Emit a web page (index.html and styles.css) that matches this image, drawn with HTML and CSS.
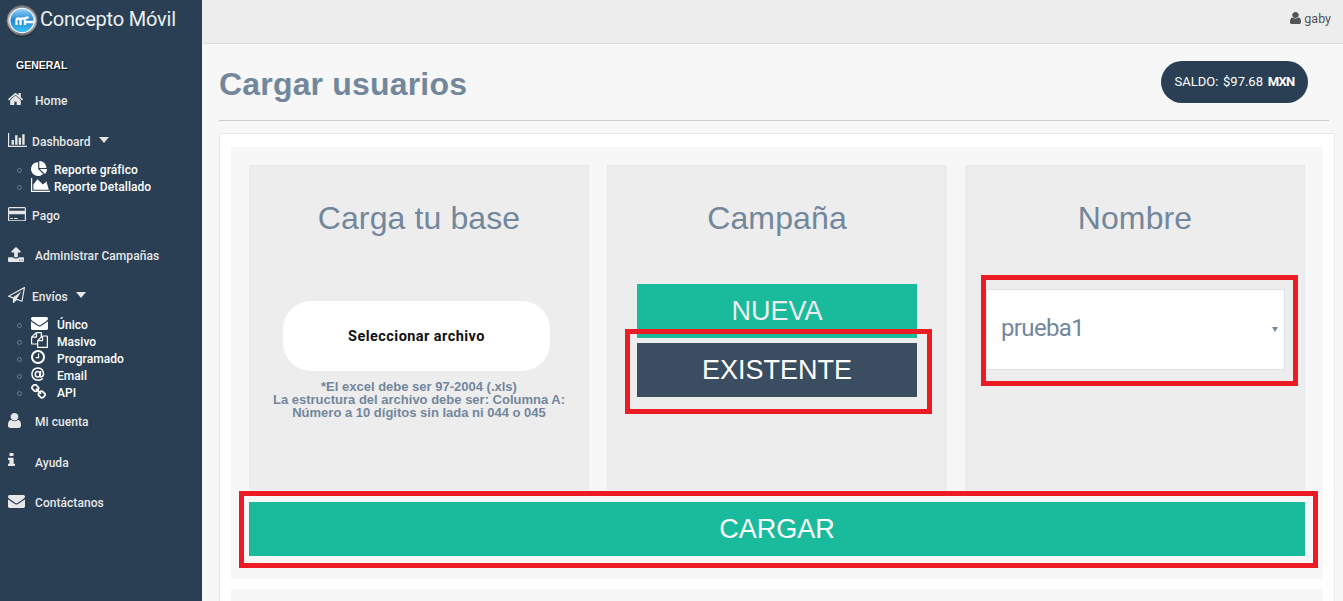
FILE: index.html
```html
<!DOCTYPE html>
<html lang="es">
<head>
<meta charset="utf-8">
<title>Cargar usuarios</title>
<link rel="stylesheet" href="styles.css">
</head>
<body>
<svg class="defs" width="0" height="0" aria-hidden="true">
  <symbol id="envelope" viewBox="0 256 1792 1408" preserveAspectRatio="none"><path d="M1792 710v794q0 66-47 113t-113 47h-1472q-66 0-113-47t-47-113v-794q44 49 101 87 362 246 497 345 57 42 92.500 65.500t94.500 48 110 24.500h2q51 0 110-24.500t94.500-48 92.500-65.500q170-123 498-345 57-39 100-87zm0-294q0 79-49 151t-122 123q-376 261-468 325-10 7-42.500 30.500t-54 38-52 32.500-57.500 27-50 9h-2q-23 0-50-9t-57.500-27-52-32.500-54-38-42.500-30.500q-91-64-262-182.500t-205-142.500q-62-42-117-115.500t-55-136.500q0-78 41.500-130t118.500-52h1472q65 0 112.500 47t47.500 113z"/></symbol>
  <symbol id="user" viewBox="256 128 1280 1536" preserveAspectRatio="none"><path d="M1536 1399q0 109-62.500 187t-150.500 78h-854q-88 0-150.500-78t-62.500-187q0-85 8.500-160.500t31.500-152 58.500-131 94-89 134.500-34.500q131 128 313 128t313-128q76 0 134.500 34.500t94 89 58.500 131 31.500 152 8.500 160.500zm-256-887q0 159-112.500 271.500t-271.500 112.500-271.500-112.500-112.500-271.500 112.500-271.500 271.500-112.500 271.500 112.500 112.500 271.500z"/></symbol>
</svg>
<div class="app">
  <aside class="sidebar">
    <div class="brand">
      <svg class="logo" width="34" height="34" viewBox="0 0 34 34">
        <defs>
          <linearGradient id="rim" x1="0" y1="0" x2="0" y2="1"><stop offset="0" stop-color="#77797c"/><stop offset=".5" stop-color="#c9c9c9"/><stop offset="1" stop-color="#6b6d70"/></linearGradient>
          <linearGradient id="blue" x1="0" y1="0" x2="0" y2="1"><stop offset="0" stop-color="#8ed0f6"/><stop offset=".5" stop-color="#2387d3"/><stop offset="1" stop-color="#3fc0f5"/></linearGradient>
        </defs>
        <circle cx="17" cy="18.500" r="15" fill="#1b232b" opacity=".6"/>
        <circle cx="17" cy="16.500" r="15" fill="url(#rim)" stroke="#66696d" stroke-width=".8"/>
        <circle cx="17" cy="16.500" r="12.800" fill="#f4f4f4"/>
        <circle cx="17" cy="16.500" r="11.500" fill="url(#blue)"/>
        <path d="M11.500 21v-4.500q0-2 2-2t2 2V21M15.500 16.500q0-2 2.200-2t2.200 2V21M19.900 17.500v-1.500q0-2.300 2-2.300h1.800M21 18h8" fill="none" stroke="#fff" stroke-width="2.300"/>
      </svg>
      <span class="brand-name">Concepto Móvil</span>
    </div>
    <div class="section">GENERAL</div>
    <nav class="menu">
      <a class="item"><span class="ico wide"><svg width="15" height="12.500" viewBox="80 253 1632 1283" preserveAspectRatio="none"><path d="M1472 992v480q0 26-19 45t-45 19h-384v-384h-256v384h-384q-26 0-45-19t-19-45v-480q0-1 .5-3t.5-3l575-474 575 474q1 2 1 6zm223-69l-62 74q-8 9-21 11h-3q-13 0-21-7l-692-577-692 577q-12 8-24 7-13-2-21-11l-62-74q-8-10-7-23.500t11-21.500l719-599q32-26 76-26t76 26l244 204v-195q0-14 9-23t23-9h192q14 0 23 9t9 23v408l219 182q10 8 11 21.500t-7 23.500z"/></svg></span><span>Home</span></a>
      <a class="item gap"><span class="ico"><svg width="19" height="14" viewBox="0 128 2048 1536" preserveAspectRatio="none"><path d="M640 896v512h-256v-512h256zm384-512v1024h-256v-1024h256zm1024 1152v128h-2048v-1536h128v1408h1920zm-640-896v768h-256v-768h256zm384-384v1152h-256v-1152h256z"/></svg></span><span>Dashboard</span><i class="caret"></i></a>
      <a class="sub"><i class="dot"></i><span class="sico"><svg width="16" height="15" viewBox="0 0 1728 1664" preserveAspectRatio="none"><path d="M768 890l546 546q-106 108-247.500 168t-298.500 60q-209 0-385.500-103t-279.500-279.500-103-385.500 103-385.500 279.500-279.500 385.500-103v762zm187 6h773q0 157-60 298.500t-168 247.500zm709-128h-768v-768q209 0 385.500 103t279.500 279.500 103 385.500z"/></svg></span><span>Reporte gráfico</span></a>
      <a class="sub"><i class="dot"></i><span class="sico"><svg width="19" height="14" viewBox="0 128 2048 1536" preserveAspectRatio="none"><path d="M2048 1536v128h-2048v-1536h128v1408h1920zm-384-1024l256 896h-1664v-576l448-576 576 576z"/></svg></span><span>Reporte Detallado</span></a>
      <a class="item"><span class="ico"><svg width="18" height="14.500" viewBox="0 128 1920 1536" preserveAspectRatio="none"><path d="M1760 128q66 0 113 47t47 113v1216q0 66-47 113t-113 47h-1600q-66 0-113-47t-47-113v-1216q0-66 47-113t113-47h1600zm-1600 128q-13 0-22.500 9.500t-9.500 22.500v224h1664v-224q0-13-9.500-22.500t-22.500-9.500h-1600zm1600 1280q13 0 22.500-9.500t9.500-22.500v-608h-1664v608q0 13 9.500 22.500t22.500 9.500h1600zm-1504-128v-128h256v128h-256zm384 0v-128h384v128h-384z"/></svg></span><span>Pago</span></a>
      <a class="item"><span class="ico wide"><svg width="16" height="15" viewBox="64 64 1664 1600" preserveAspectRatio="none"><path d="M1344 1472q0-26-19-45t-45-19-45 19-19 45 19 45 45 19 45-19 19-45zm256 0q0-26-19-45t-45-19-45 19-19 45 19 45 45 19 45-19 19-45zm128-224v320q0 40-28 68t-68 28h-1472q-40 0-68-28t-28-68v-320q0-40 28-68t68-28h427q21 56 70.500 92t110.500 36h256q61 0 110.500-36t70.500-92h427q40 0 68 28t28 68zm-325-648q-17 40-59 40h-256v448q0 26-19 45t-45 19h-256q-26 0-45-19t-19-45v-448h-256q-42 0-59-40-17-39 14-69l448-448q18-19 45-19t45 19l448 448q31 30 14 69z"/></svg></span><span>Administrar Campañas</span></a>
      <a class="item gap"><span class="ico"><svg width="17" height="16" viewBox="0 0 1792 1792" preserveAspectRatio="none"><path d="M1764 11q33 24 27 64l-256 1536q-5 29-32 45-14 8-31 8-11 0-24-5l-527-215-298 327q-18 21-47 21-14 0-23-4-19-7-30-23.500t-11-36.500v-452l-472-193q-37-14-40-55-3-39 32-59l1664-960q35-21 68 2zm-342 1499l221-1323-1434 827 336 137 863-639-478 797z"/></svg></span><span>Envíos</span><i class="caret"></i></a>
      <a class="sub far"><i class="dot"></i><span class="sico"><svg width="17" height="13"><use href="#envelope"/></svg></span><span>Único</span></a>
      <a class="sub far"><i class="dot"></i><span class="sico"><svg width="17" height="16" viewBox="0 0 1792 1792" preserveAspectRatio="none"><path d="M1696 384q40 0 68 28t28 68v1216q0 40-28 68t-68 28h-960q-40 0-68-28t-28-68v-288h-544q-40 0-68-28t-28-68v-672q0-40 20-88t48-76l408-408q28-28 76-48t88-20h416q40 0 68 28t28 68v328q68-40 128-40h416zm-544 213l-299 299h299v-299zm-640-384l-299 299h299v-299zm196 647l316-316v-416h-384v416q0 40-28 68t-68 28h-416v640h512v-256q0-40 20-88t48-76zm956 804v-1152h-384v416q0 40-28 68t-68 28h-416v640h896z"/></svg></span><span>Masivo</span></a>
      <a class="sub far"><i class="dot"></i><span class="sico"><svg width="14" height="14" viewBox="128 128 1536 1536"><path d="M1024 544v448q0 14-9 23t-23 9h-320q-14 0-23-9t-9-23v-64q0-14 9-23t23-9h224v-352q0-14 9-23t23-9h64q14 0 23 9t9 23zm416 352q0-148-73-273t-198-198-273-73-273 73-198 198-73 273 73 273 198 198 273 73 273-73 198-198 73-273zm224 0q0 209-103 385.500t-279.500 279.500-385.500 103-385.500-103-279.500-279.500-103-385.500 103-385.500 279.500-279.500 385.500-103 385.500 103 279.500 279.500 103 385.500z"/></svg></span><span>Programado</span></a>
      <a class="sub far"><i class="dot"></i><span class="sico"><svg class="line" width="14" height="14" viewBox="0 0 14 14"><ellipse cx="6.700" cy="7.200" rx="2.400" ry="2.800"/><path d="M9.700 4.200L9 8.500q-.2 1.500 1 1.500 2.500-.4 2.500-3.500Q12 1.200 7.200.9 1.200 1.200.9 7q.3 6 6.300 6.200 2.500 0 4.600-1.600"/></svg></span><span>Email</span></a>
      <a class="sub far"><i class="dot"></i><span class="sico"><svg width="15" height="15" viewBox="16 80 1632 1568"><path d="M1456 1216q0-40-28-68l-208-208q-28-28-68-28-42 0-72 32 3 3 19 18.500t21.500 21.500 15 19 13 25.500 3.500 27.500q0 40-28 68t-68 28q-15 0-27.500-3.500t-25.500-13-19-15-21.500-21.500-18.500-19q-33 31-33 73 0 40 28 68l206 207q27 27 68 27 40 0 68-26l147-146q28-28 28-67zm-703-705q0-40-28-68l-206-207q-28-28-68-28-39 0-68 27l-147 146q-28 28-28 67 0 40 28 68l208 208q27 27 68 27 42 0 72-31-3-3-19-18.500t-21.500-21.500-15-19-13-25.500-3.500-27.500q0-40 28-68t68-28q15 0 27.500 3.500t25.500 13 19 15 21.500 21.500 18.500 19q33-31 33-73zm895 705q0 120-85 203l-147 146q-83 83-203 83-121 0-204-85l-206-207q-83-83-83-203 0-123 88-209l-88-88q-86 88-208 88-120 0-204-84l-208-208q-84-84-84-204t85-203l147-146q83-83 203-83 121 0 204 85l206 207q83 83 83 203 0 123-88 209l88 88q86-88 208-88 120 0 204 84l208 208q84 84 84 204z"/></svg></span><span>API</span></a>
      <a class="item"><span class="ico wide"><svg width="13" height="15"><use href="#user"/></svg></span><span>Mi cuenta</span></a>
      <a class="item gap"><span class="ico wide up"><svg width="7" height="13" viewBox="576 128 640 1408" preserveAspectRatio="none"><path d="M1216 1344v128q0 26-19 45t-45 19h-512q-26 0-45-19t-19-45v-128q0-26 19-45t45-19h64v-384h-64q-26 0-45-19t-19-45v-128q0-26 19-45t45-19h384q26 0 45 19t19 45v576h64q26 0 45 19t19 45zm-128-1152v192q0 26-19 45t-45 19h-256q-26 0-45-19t-19-45v-192q0-26 19-45t45-19h256q26 0 45 19t19 45z"/></svg></span><span>Ayuda</span></a>
      <a class="item"><span class="ico wide"><svg width="17" height="13"><use href="#envelope"/></svg></span><span>Contáctanos</span></a>
    </nav>
  </aside>
  <main class="main">
    <header class="topbar"><svg width="11" height="12"><use href="#user"/></svg><span>gaby</span></header>
    <div class="heading">
      <h1>Cargar usuarios</h1>
      <div class="balance">SALDO: $97.68 <b>MXN</b></div>
    </div>
    <section class="panel">
      <div class="block">
        <div class="cards">
          <div class="card">
            <h2>Carga tu base</h2>
            <button class="file">Seleccionar archivo</button>
            <p class="note">*El excel debe ser 97-2004 (.xls)<br>La estructura del archivo debe ser: Columna A:<br>Número a 10 dígitos sin lada ni 044 o 045</p>
          </div>
          <div class="card">
            <h2>Campaña</h2>
            <div class="choices">
              <button class="btn new">NUEVA</button>
              <div class="marked"><button class="btn existing">EXISTENTE</button><i class="mark mark-existing"></i></div>
            </div>
          </div>
          <div class="card">
            <h2>Nombre</h2>
            <div class="marked select"><span>prueba1</span><i class="arrow"></i><i class="mark mark-select"></i></div>
          </div>
        </div>
        <div class="marked submit"><button class="btn">CARGAR</button><i class="mark mark-submit"></i></div>
      </div>
      <div class="block"></div>
    </section>
  </main>
</div>
</body>
</html>
```
FILE: styles.css
```css
* { box-sizing: border-box; }
body { margin: 0; background: #f7f7f7; font-family: "Liberation Sans", Arial, sans-serif; color: #73879c; }
.defs { position: absolute; }
.app { display: flex; height: 601px; overflow: hidden; }
svg { display: block; fill: currentColor; }
button { border: 0; padding: 0; font-family: inherit; display: block; }

.sidebar { width: 202px; flex: none; background: #2a3f54; color: #e7e7e7; }
.brand { display: flex; height: 56px; padding: 4px 0 0 5px; }
.brand-name { margin-left: 1px; font: 20px/30px Roboto, sans-serif; letter-spacing: -.2px; color: #ecf0f1; white-space: nowrap; }
.section { height: 24px; padding-left: 16px; font: bold 10.500px/19px "Liberation Sans", Arial, sans-serif; letter-spacing: 0; color: #fff; text-shadow: 1px 1px #000; }
.menu { display: flex; flex-direction: column; font: 500 12px/17px Roboto, sans-serif; letter-spacing: .05px; }
.item { display: flex; align-items: center; height: 40px; padding-left: 8px; padding-top: 3px; }
.item.gap { margin-top: 1px; }
.ico { width: 24px; margin-bottom: 5px; }
.ico.wide { width: 27px; }
.ico.up { margin-bottom: 8px; }
.caret { margin: 0 0 5px 8px; border: 5.500px solid transparent; border-top: 6px solid #e7e7e7; border-bottom: 0; }
.sub { display: flex; align-items: center; height: 17px; padding: 1px 0 0 17px; color: #fff; }
.dot { width: 5px; height: 5px; margin-right: 9px; border: 1px solid #6d7f92; border-radius: 50%; margin-top: 1px; }
.sico { width: 23px; margin-bottom: 4px; }
.far .sico { width: 26px; }
.line { fill: none; stroke: currentColor; stroke-width: 1.5; }

.main { flex: 1; min-width: 0; }
.topbar { display: flex; justify-content: flex-end; align-items: center; gap: 3px; height: 44px; padding: 0 12px 7px 0; background: #ededed; border-bottom: 1px solid #d9dee4; font: 12.5px Roboto, sans-serif; color: #515356; }
.heading { display: flex; justify-content: space-between; height: 77px; margin: 0 14px 0 17px; padding: 17px 21px 0 0; border-bottom: 1px solid #ccc; }
h1 { margin: 0; font-size: 32px; line-height: 46px; letter-spacing: .18px; }
.balance { width: 147px; height: 42px; border-radius: 21px; background: #2a3f54; color: #fff; text-align: center; font: 13px/41px Roboto, sans-serif; word-spacing: 1.500px; white-space: nowrap; }
.balance b { letter-spacing: -.7px; }
.panel { width: 1116px; height: 500px; margin: 12px 0 0 17px; padding: 13px 11px; background: #fff; border: 1px solid #e6e9ed; }
.block { height: 432px; margin-bottom: 10px; padding: 18px 18px 0; background: #f7f7f7; }
.cards { display: flex; gap: 18px; }
.card { width: 340px; height: 325px; padding-top: 32px; background: #ededed; border: 1px solid #e6e9ed; }
h2 { margin: 0; padding-bottom: 1px; text-align: center; font-size: 32px; font-weight: 400; line-height: 40px; letter-spacing: .12px; }
.file { width: 267px; height: 70px; margin: 62px 0 0 33px; padding-top: 1px; border-radius: 28px; background: #fff; color: #111; font: bold 14.500px Roboto, sans-serif; letter-spacing: .45px; }
.note { margin: 9px 0 0; text-align: center; font-size: 13px; font-weight: bold; line-height: 13px; white-space: nowrap; }
.choices { display: flex; flex-direction: column; gap: 5px; margin: 45px 29px 0; }
.btn { width: 100%; height: 54px; background: #1abb9c; color: #fff; font-size: 27px; }
.new { color: #ededed; }
.existing { background: #3b4d60; }
.marked { position: relative; }
.mark { position: absolute; border: 5px solid #ed1c24; }
.mark-existing { left: -12px; top: -14px; width: 307px; height: 85px; }
.mark-select { left: -6px; top: -15px; width: 317px; height: 111px; }
.mark-submit { left: -10px; top: -11px; width: 1079px; height: 77px; }
.select { display: flex; align-items: center; justify-content: space-between; width: 299px; height: 81px; margin: 50px 0 0 20px; padding: 0 6px 4px 14px; background: #fff; border: 1px solid #dde2e8; font: 24px Roboto, sans-serif; letter-spacing: -.65px; }
.arrow { margin-top: 3px; border: 3px solid transparent; border-top: 5px solid #73879c; border-bottom: 0; }
.submit { margin-top: 12px; }
```
